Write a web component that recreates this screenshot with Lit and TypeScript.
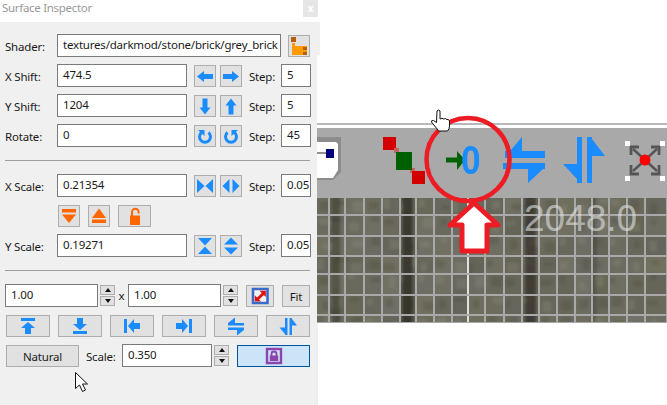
import { LitElement, html, css, svg } from "lit";
import { customElement } from "lit/decorators.js";

const BLUE = "#1a8cff";
const ORANGE = "#ff6600";

const arrow = svg`<polygon points="2,10.5 9,5 9,8 18,8 18,13 9,13 9,16"/>`;
const barArrow = svg`<path d="M3 2h14v3H3z"/><polygon points="10,6 17,12 13,12 13,18 7,18 7,12 3,12"/>`;

const rot = (deg: number, body: unknown) => svg`<g transform="rotate(${deg} 10 10.5)">${body}</g>`;

const turn = svg`<path d="M6.5 6.5A5.5 5.5 0 1 0 13.5 6.5" fill="none" stroke="${BLUE}" stroke-width="3"/><polygon points="3,4 9.5,4 9.5,10"/>`;

const bow = svg`<polygon points="2,3 2,17 9.5,10"/><polygon points="18,3 18,17 10.5,10"/>`;
const unbow = svg`<polygon points="8.5,3 8.5,17 1.5,10"/><polygon points="11.5,3 11.5,17 18.5,10"/>`;

const ICONS: Record<string, unknown> = {
  left: arrow,
  right: rot(180, arrow),
  down: rot(-90, arrow),
  up: rot(90, arrow),
  cw: turn,
  ccw: svg`<g transform="matrix(-1 0 0 1 20 0)">${turn}</g>`,
  bow,
  unbow,
  vbow: svg`<g transform="rotate(90 10 10)">${bow}</g>`,
  vunbow: svg`<g transform="rotate(90 10 10)">${unbow}</g>`,
  topbar: barArrow,
  botbar: svg`<g transform="rotate(180 10 10)">${barArrow}</g>`,
  leftbar: svg`<g transform="rotate(-90 10 10)">${barArrow}</g>`,
  rightbar: svg`<g transform="rotate(90 10 10)">${barArrow}</g>`,
  fliph: svg`<polygon points="9,1.5 9,7 2,7"/><path d="M2 7h16v2.5H2zM2 11.5h16V14H2z"/><polygon points="18,14 11,14 11,19.5"/>`,
  flipv: svg`<path d="M7 2h2.5v17H7zM11.5 2H14v17h-2.5z"/><polygon points="14,3 19,9.5 14,9.5"/><polygon points="1.5,11.5 7,11.5 7,18"/>`,
};

const ORANGE_ICONS: Record<string, unknown> = {
  sdown: svg`<path d="M3 3h14v3.500H3z"/><polygon points="3,8.500 17,8.500 10,17"/>`,
  sup: svg`<polygon points="10,2.500 17,12 3,12"/><path d="M3 13.500h14V17H3z"/>`,
  unlock: svg`<path d="M5 9.500h10V19H5z"/><path d="M7 10V6a3.300 3.300 0 0 1 6.600 0v1.500" fill="none" stroke="${ORANGE}" stroke-width="2"/>`,
};

const browseIcon = svg`
  <path fill="#b45f06" d="M2 1h5v5H2z"/>
  <path fill="#ff9a00" d="M3 7h3v3h12v9H3z"/>
  <path fill="#b45f06" d="M14 11h4v3h-4zM14 16h4v3h-4z"/>`;

const fitIcon = svg`
  <path d="M3 3h14.500v14H3z" fill="#f4f4f4" stroke="#3a6bc8" stroke-width="2.600"/>
  <path d="M7 13.500 14 7" stroke="#e01010" stroke-width="3"/>
  <polygon points="9.500,4.800 15.800,4.800 15.800,11" fill="#e01010"/>
  <polygon points="4.800,9.200 4.800,15.500 11,15.500" fill="#e01010"/>`;

const lockIcon = svg`
  <path d="M3 3h14v14H3z" fill="none" stroke="#8e44ad" stroke-width="2.400"/>
  <path d="M5.800 9.500h8.400V15H5.800z" fill="#8e44ad"/>
  <path d="M7.500 10V8a2.500 2.500 0 0 1 5 0v2" fill="none" stroke="#8e44ad" stroke-width="1.800"/>`;

const svgIcon = (body: unknown, fill = BLUE) =>
  html`<svg class="ic" viewBox="0 0 20 20" width="20" height="20" fill=${fill}>${body}</svg>`;

const iconBtn = (name: string) => html`<div class="btn sq">${svgIcon(ICONS[name])}</div>`;
const wideBtn = (name: string) => html`<div class="btn wide">${svgIcon(ICONS[name])}</div>`;
const orangeBtn = (name: string, cls = "sq") =>
  html`<div class="btn ${cls}">${svgIcon(ORANGE_ICONS[name], ORANGE)}</div>`;

const spinner = () => html`<div class="spin">
  <div class="sb"><span class="tri up"></span></div>
  <div class="sb"><span class="tri dn"></span></div>
</div>`;

function controlRow(label: string, value: string, a: string, b: string, step: string) {
  return html`<div class="row">
    <span class="lbl">${label}</span>
    <div class="field main"><span>${value}</span></div>
    <div class="pair">${iconBtn(a)}${iconBtn(b)}</div>
    <span class="step">Step:</span>
    <div class="field stepf"><span>${step}</span></div>
  </div>`;
}

/* texture data */
const XS = [329, 345, 364, 382, 400, 416, 434, 452, 468, 485, 504, 522, 539, 557, 575, 592, 609, 627, 645, 667];
const YS = [215, 236, 256, 274, 295, 315, 323];
function tex() {
  let seed = 11;
  const rnd = () => {
    seed = (seed * 1103515245 + 12345) & 0x7fffffff;
    return seed / 0x7fffffff;
  };
  const tiles: unknown[] = [];
  const blotches: unknown[] = [];
  let y0 = 198;
  for (const y1 of YS) {
    let x0 = 317;
    for (const x1 of XS) {
      const v = rnd();
      const r = Math.round(100 + v * 14);
      const g = Math.round(100 + v * 13);
      const b = Math.round(84 + v * 12 + rnd() * 8);
      tiles.push(svg`<rect x=${x0} y=${y0} width=${x1 - x0} height=${y1 - y0} fill="rgb(${r},${g},${b})"/>`);
      const isDark = rnd() > 0.5;
      blotches.push(
        svg`<rect x=${x0 + rnd() * 8} y=${y0 + rnd() * 8} width=${5 + rnd() * 8} height=${4 + rnd() * 8} fill=${isDark ? "#4a4a3c" : "#8e8d7e"} opacity="0.3"/>`
      );
      x0 = x1;
    }
    y0 = y1;
  }
  const stripes = [
    [331, 9, 0.4],
    [402, 11, 0.7],
    [525, 11, 0.6],
    [592, 4, 0.3],
  ];
  const dark = stripes.map(
    ([x, w, o]) => svg`<rect x=${x} y="190" width=${w} height="140" fill="#24221b" opacity=${o}/>`
  );
  const lines: unknown[] = [];
  for (const x of XS) {
    lines.push(svg`<rect x=${x - 1} y="198" width="2" height="125" fill=${x === 468 ? "#e0e0e0" : "#a9a9a9"}/>`);
  }
  for (const y of YS) {
    lines.push(svg`<rect x="317" y=${y - 1} width="350" height="2" fill="#a9a9a9"/>`);
  }
  return svg`
    <defs><filter id="soft" x="-5%" y="-5%" width="110%" height="110%"><feGaussianBlur stdDeviation="1.400"/></filter></defs>
    ${tiles}
    <g filter="url(#soft)">${blotches}${dark}</g>
    ${lines}`;
}

@customElement("app-root")
export class AppRoot extends LitElement {
  static styles = css`
    :host {
      display: block;
      width: 667px;
      height: 405px;
      overflow: hidden;
      background: #fff;
      font-family: "Noto Sans", "Open Sans", sans-serif;
      font-size: 11.5px;
      letter-spacing: -0.2px;
      color: #1a1a1a;
    }
    .page { display: flex; width: 667px; height: 405px; position: relative; }
    .panel { width: 317px; flex: none; display: flex; flex-direction: column; background: #f0f0f0; }
    .title { height: 22px; background: #fff; display: flex; justify-content: space-between; align-items: flex-start; }
    .title-text { color: #999; padding-left: 2px; line-height: 15px; letter-spacing: -0.3px; }
    .close { width: 15px; height: 17px; margin-right: -1px; background: #e6e6e6; color: #fff; text-align: center; line-height: 17px; font-size: 10px; font-weight: 700; }
    .body { padding: 12px 0 0 5px; display: flex; flex-direction: column; }
    .row { display: flex; align-items: flex-end; height: 23px; margin-bottom: 7px; }
    .lbl { width: 52px; flex: none; align-self: center; padding-top: 1px; }
    .field { box-sizing: border-box; height: 23px; background: #fff; border: 1px solid #7a7a7a; flex: none; display: flex; align-items: center; padding: 0 0 3px 5px; white-space: nowrap; }
    .main { width: 130px; }
    .shader { width: 224px; }
    .shader span { display: block; width: 216px; overflow: hidden; }
    .stepf { width: 30px; }
    .pair { display: flex; gap: 4px; margin-left: 7px; width: 48px; flex: none; }
    .step { width: 32px; margin-left: 7px; flex: none; align-self: center; padding-top: 1px; }
    .btn { box-sizing: border-box; height: 22px; background: #e1e1e1; border: 1px solid #adadad; display: flex; align-items: center; justify-content: center; flex: none; }
    .sq { width: 22px; }
    .wide { width: 44px; }
    .lockw { width: 33px; }
    .ic { display: block; flex: none; }
    .browse { margin-left: 7px; }
    .rule { height: 1px; background: #a0a0a0; width: 305px; margin: 6px 0 13px; }
    .scale-tools { display: flex; gap: 8px; margin: 1px 0 7px 53px; height: 22px; }
    .dims { display: flex; align-items: flex-end; height: 23px; }
    .dim { width: 93px; }
    .spin { display: flex; flex-direction: column; gap: 1px; margin: 0 0 1px 2px; width: 15px; flex: none; }
    .sb { box-sizing: border-box; width: 15px; height: 10px; background: #e1e1e1; border: 1px solid #adadad; display: flex; align-items: center; justify-content: center; }
    .tri { width: 0; height: 0; border-left: 3.5px solid transparent; border-right: 3.5px solid transparent; }
    .tri.up { border-bottom: 4px solid #111; }
    .tri.dn { border-top: 4px solid #111; }
    .times { width: 13px; text-align: center; flex: none; align-self: center; }
    .tall { width: 28px; margin-left: 8px; }
    .fit { width: 28px; margin-left: 8px; }
    .moves { display: flex; gap: 8px; margin: 8px 0 7px 1px; }
    .last { display: flex; align-items: flex-end; height: 23px; margin-left: 1px; }
    .nat { width: 73px; }
    .scale-lbl { width: 36px; margin-left: 7px; flex: none; align-self: center; padding-top: 1px; }
    .sc { width: 90px; }
    .lock { box-sizing: border-box; width: 73px; height: 22px; margin-left: 8px; background: #cce4f7; border: 1px solid #005499; display: flex; align-items: center; justify-content: center; flex: none; }
    .view { flex: 1; display: flex; flex-direction: column; min-width: 0; }
    .nub { height: 33px; width: 3px; margin-top: 22px; background: #f0f0f0; flex: none; }
    .gap { height: 68px; flex: none; }
    .hr { height: 2px; background: #b9b9b9; flex: none; }
    .white { height: 3px; flex: none; }
    .toolbar { height: 70px; background: #a9a9a9; flex: none; }
    .texture { height: 125px; flex: none; display: block; }
    .bottom { flex: 1; border-left: 1px solid #eee; }
    .over { position: absolute; left: 317px; top: 0; pointer-events: none; }
    .zero { position: absolute; left: 461px; top: 137px; font: 700 41px/46px "Liberation Sans", sans-serif; letter-spacing: 0; color: #1a8cff; transform: scaleX(0.86); transform-origin: left center; }
    .size { position: absolute; left: 524px; top: 198px; font: 400 37px/42px "Liberation Sans", sans-serif; letter-spacing: 0; color: rgba(226,226,226,.62); }
    .pointer { position: absolute; left: 0; top: 0; pointer-events: none; }
  `;

  render() {
    return html`<div class="page">
      <div class="panel">
        <div class="title">
          <span class="title-text">Surface Inspector</span>
          <span class="close">x</span>
        </div>
        <div class="body">
          <div class="row">
            <span class="lbl">Shader:</span>
            <div class="field shader"><span>textures/darkmod/stone/brick/grey_brick</span></div>
            <div class="btn sq browse">${svgIcon(browseIcon)}</div>
          </div>
          ${controlRow("X Shift:", "474.5", "left", "right", "5")}
          ${controlRow("Y Shift:", "1204", "down", "up", "5")}
          ${controlRow("Rotate:", "0", "cw", "ccw", "45")}
          <div class="rule"></div>
          ${controlRow("X Scale:", "0.21354", "bow", "unbow", "0.05")}
          <div class="scale-tools">
            ${orangeBtn("sdown")}${orangeBtn("sup")}${orangeBtn("unlock", "lockw")}
          </div>
          ${controlRow("Y Scale:", "0.19271", "vbow", "vunbow", "0.05")}
          <div class="rule"></div>
          <div class="dims">
            <div class="field dim"><span>1.00</span></div>
            ${spinner()}
            <span class="times">x</span>
            <div class="field dim"><span>1.00</span></div>
            ${spinner()}
            <div class="btn tall">${svgIcon(fitIcon)}</div>
            <div class="btn fit">Fit</div>
          </div>
          <div class="moves">
            ${wideBtn("topbar")}${wideBtn("botbar")}${wideBtn("leftbar")}${wideBtn("rightbar")}${wideBtn("fliph")}${wideBtn("flipv")}
          </div>
          <div class="last">
            <div class="btn nat">Natural</div>
            <span class="scale-lbl">Scale:</span>
            <div class="field sc"><span>0.350</span></div>
            ${spinner()}
            <div class="lock">${svgIcon(lockIcon)}</div>
          </div>
        </div>
      </div>
      <div class="view">
        <div class="nub"></div>
        <div class="gap"></div>
        <div class="hr"></div>
        <div class="white"></div>
        <div class="toolbar"></div>
        <svg class="texture" viewBox="317 198 350 125" width="350" height="125">${tex()}</svg>
        <div class="bottom"></div>
      </div>
      <span class="size">2048.0</span>
      <svg class="over" viewBox="317 0 350 405" width="350" height="405">
        <!-- swatch -->
        <path d="M317 137h24v35l-8 8h-16z" fill="#8c8c8c"/>
        <path d="M317 142h19l2 2v26l-5 8h-16z" fill="#fff"/>
        <path d="M317 153h9" stroke="#222"/>
        <path d="M326 149h8v9h-8z" fill="#00007f"/>
        <!-- vertex squares -->
        <path d="M383 137h13v13h-13z" fill="#d40000"/>
        <path d="M394 148h5v5h-5zM410 168h5v5h-5z" fill="#c56060"/>
        <path d="M396 152h16v18h-16z" fill="#005f00"/>
        <path d="M412 171h13v13h-13z" fill="#d40000"/>
        <!-- green arrow -->
        <path d="M446 157.500h12v5h-12z" fill="#006400"/>
        <polygon points="457,151 465,160 457,170" fill="#006400"/>
        <!-- flip h -->
        <g fill="${BLUE}">
          <polygon points="522,137 522,151 510,151"/>
          <path d="M505 151h40v7h-40zM503 163h42v6h-42z"/>
          <polygon points="543,169 528,169 528,183"/>
          <!-- flip v -->
          <path d="M577 137h5v46h-5zM587 137h5v46h-5z"/>
          <polygon points="592,139 605,156 592,156"/>
          <polygon points="563,164 577,164 577,179"/>
        </g>
        <!-- select -->
        <g stroke="#555" stroke-width="2.400" fill="none">
          <path d="M633 149l24 22M657 149l-24 22"/>
          <path d="M631 155v-8h8M659 155v-8h-8M631 165v9h8M659 165v9h-8" stroke-width="2.800"/>
        </g>
        <circle cx="645" cy="160" r="5.500" fill="#ff0000"/>
        <path d="M625 141h5v5h-5zM660 141h5v5h-5zM625 176h5v5h-5zM660 176h5v5h-5z" fill="#fff"/>
        <!-- annotation circle and arrow -->
        <circle cx="468" cy="159.500" r="41.500" fill="none" stroke="#ed1c24" stroke-width="4.500"/>
        <polygon points="474,203 498,225 487,225 487,251 462,251 462,225 450,225" fill="#fff" stroke="#ed1c24" stroke-width="5" stroke-linejoin="round"/>
        <!-- hand -->
        <path d="M437 111q1.500-2 3 0v8q2-1.500 3.500 0 2-1 3.500.5 2-.5 2.500 1.500v5q0 3-2 5h-9q-1-2-3-4l-4-5q-.5-2 2-1.500l3 2z" fill="#fff" stroke="#111" stroke-width="1"/>
      </svg>
      <span class="zero">0</span>
      <svg class="pointer" viewBox="0 0 667 405" width="667" height="405">
        <path d="M75.500 372.500v16l4-3.500 3 6.500 3-1.500-3-6h5z" fill="#fff" stroke="#111" stroke-width="1"/>
      </svg>
    </div>`;
  }
}
